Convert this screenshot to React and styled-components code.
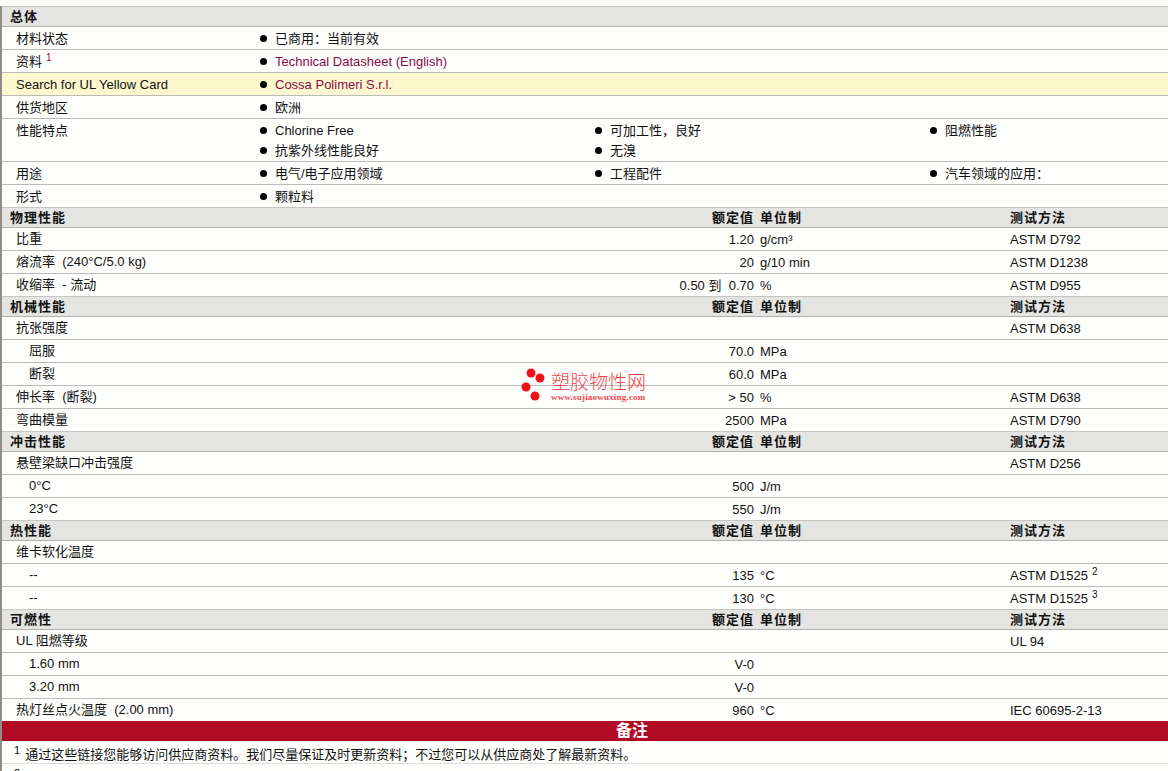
import styled, { createGlobalStyle } from 'styled-components'

const GlobalStyle = createGlobalStyle`
    html, body {
        margin: 0;
        height: 771px;
        overflow: hidden;
        background: #fefffd;
    }
    body {
        font-family: "Liberation Sans", "Noto Sans CJK SC", sans-serif;
        font-size: 13px;
        color: #111;
    }
`

const general = [
    { name: '材料状态', items: ['已商用：当前有效'] },
    { name: '资料', note: 1, noteLink: true, items: ['Technical Datasheet (English)'], link: true },
    { name: 'Search for UL Yellow Card', items: ['Cossa Polimeri S.r.l.'], link: true, highlight: true },
    { name: '供货地区', items: ['欧洲'] },
    { name: '性能特点', items: ['Chlorine Free', '可加工性，良好', '阻燃性能', '抗紫外线性能良好', '无溴'] },
    { name: '用途', items: ['电气/电子应用领域', '工程配件', '汽车领域的应用：'] },
    { name: '形式', items: ['颗粒料'] },
]

const sections = [
    {
        title: '物理性能',
        rows: [
            { name: '比重', value: '1.20', unit: 'g/cm³', test: 'ASTM D792' },
            { name: '熔流率  (240°C/5.0 kg)', value: '20', unit: 'g/10 min', test: 'ASTM D1238' },
            { name: '收缩率  - 流动', value: '0.50 到  0.70', unit: '%', test: 'ASTM D955' },
        ],
    },
    {
        title: '机械性能',
        rows: [
            { name: '抗张强度', test: 'ASTM D638' },
            { name: '屈服', sub: true, value: '70.0', unit: 'MPa' },
            { name: '断裂', sub: true, value: '60.0', unit: 'MPa' },
            { name: '伸长率  (断裂)', value: '> 50', unit: '%', test: 'ASTM D638' },
            { name: '弯曲模量', value: '2500', unit: 'MPa', test: 'ASTM D790' },
        ],
    },
    {
        title: '冲击性能',
        rows: [
            { name: '悬壁梁缺口冲击强度', test: 'ASTM D256' },
            { name: '0°C', sub: true, value: '500', unit: 'J/m' },
            { name: '23°C', sub: true, value: '550', unit: 'J/m' },
        ],
    },
    {
        title: '热性能',
        rows: [
            { name: '维卡软化温度' },
            { name: '--', sub: true, value: '135', unit: '°C', test: 'ASTM D1525', note: 2 },
            { name: '--', sub: true, value: '130', unit: '°C', test: 'ASTM D1525', note: 3 },
        ],
    },
    {
        title: '可燃性',
        rows: [
            { name: 'UL 阻燃等级', test: 'UL 94' },
            { name: '1.60 mm', sub: true, value: 'V-0' },
            { name: '3.20 mm', sub: true, value: 'V-0' },
            { name: '热灯丝点火温度  (2.00 mm)', value: '960', unit: '°C', test: 'IEC 60695-2-13' },
        ],
    },
]

const App = () => {
    return (
        <Sheet>
            <GlobalStyle />
            <SectionHead>
                <HeadTitle>总体</HeadTitle>
            </SectionHead>
            {general.map((row) => (
                <InfoRow key={row.name} $highlight={row.highlight}>
                    <Name>
                        {row.name}
                        {row.note && <Note $link={row.noteLink}>{row.note}</Note>}
                    </Name>
                    {row.items.map((item) => (
                        <Bullet key={item} $link={row.link}>{item}</Bullet>
                    ))}
                </InfoRow>
            ))}
            {sections.map((section) => (
                <Section key={section.title}>
                    <SectionHead>
                        <HeadTitle>{section.title}</HeadTitle>
                        <HeadValue>额定值</HeadValue>
                        <HeadUnit>单位制</HeadUnit>
                        <HeadTitle as="div">测试方法</HeadTitle>
                    </SectionHead>
                    {section.rows.map((row, index) => (
                        <DataRow key={index}>
                            <Name $sub={row.sub}>{row.name}</Name>
                            <Value>{row.value}</Value>
                            <Unit>{row.unit}</Unit>
                            <TestMethod>
                                {row.test}
                                {row.note && <Note>{row.note}</Note>}
                            </TestMethod>
                        </DataRow>
                    ))}
                </Section>
            ))}
            <NotesBar>备注</NotesBar>
            <NoteRow>
                <NoteMark>1</NoteMark>
                通过这些链接您能够访问供应商资料。我们尽量保证及时更新资料；不过您可以从供应商处了解最新资料。
            </NoteRow>
            <NoteRow>
                <NoteMark>2</NoteMark>
            </NoteRow>
            <Watermark>
                <svg width="28" height="38" viewBox="0 0 28 38">
                    <circle cx="10" cy="6" r="4.5" fill="#f01018" />
                    <circle cx="19" cy="11" r="4.5" fill="#f01018" />
                    <circle cx="5" cy="20" r="4.5" fill="#f01018" />
                    <circle cx="14" cy="29" r="4.5" fill="#f01018" />
                </svg>
                <WatermarkText>
                    <WatermarkName>塑胶物性网</WatermarkName>
                    <WatermarkUrl>www.sujiaowuxing.com</WatermarkUrl>
                </WatermarkText>
            </Watermark>
        </Sheet>
    )
}

const Sheet = styled.div`
    position: relative;
    box-sizing: border-box;
    width: 1262px;
    margin-top: 6px;
    border-left: 2px solid #8f8f86;
    white-space: pre-wrap;
`

const Section = styled.section`
    margin-top: -1px;
`

const SectionHead = styled.div`
    display: grid;
    grid-template-columns: 492px 252px 256px 1fr;
    box-sizing: border-box;
    height: 21px;
    padding-left: 8px;
    border-top: 1px solid #c6c6c2;
    border-bottom: 1px solid #b4b0b0;
    background: #e4e4e2;
    line-height: 19px;
    font-weight: bold;
`

const HeadTitle = styled.h3`
    margin: 0;
    font-size: 13px;
    letter-spacing: 1px;
`

const HeadValue = styled(HeadTitle).attrs({ as: 'div' })`
    text-align: right;
`

const HeadUnit = styled(HeadTitle).attrs({ as: 'div' })`
    padding-left: 6px;
`

const InfoRow = styled.div`
    display: grid;
    grid-template-columns: 258px 335px 335px 1fr;
    padding: 2px 0 1px;
    border-bottom: 1px solid #bbb;
    background: ${(props) => (props.$highlight ? '#fdf8cd' : 'transparent')};
    line-height: 19px;
    row-gap: 1px;
`

const Name = styled.div`
    padding-left: ${(props) => (props.$sub ? '27px' : '14px')};
`

const Bullet = styled.div`
    display: flex;
    align-items: center;
    color: ${(props) => (props.$link ? '#8a0a48' : 'inherit')};
    &::before {
        content: '';
        flex: none;
        width: 7px;
        height: 7px;
        margin: 0 8px 0 0;
        border-radius: 50%;
        background: #000;
    }
    &:nth-child(5) {
        grid-column: 2;
    }
`

const Note = styled.sup`
    margin-left: 4px;
    font-size: 10px;
    line-height: 0;
    color: ${(props) => (props.$link ? '#8a0a48' : 'inherit')};
`

const DataRow = styled.div`
    display: grid;
    grid-template-columns: 500px 252px 256px 1fr;
    box-sizing: border-box;
    height: 23px;
    border-bottom: 1px solid #bbb;
    line-height: 22px;
`

const Value = styled.div`
    padding-top: 1px;
    text-align: right;
`

const Unit = styled.div`
    padding: 1px 0 0 6px;
`

const TestMethod = styled.div`
    padding-top: 1px;
`

const NotesBar = styled.div`
    position: relative;
    height: 20px;
    margin-top: -1px;
    background: #b00a24;
    color: #fff;
    font-size: 16px;
    font-weight: bold;
    line-height: 20px;
    text-align: center;
`

const NoteRow = styled.div`
    box-sizing: border-box;
    height: 23px;
    padding-left: 12px;
    border-bottom: 1px solid #ddd;
    line-height: 28px;
`

const NoteMark = styled.sup`
    margin-right: 5px;
    font-size: 11px;
    line-height: 0;
`

const Watermark = styled.div`
    position: absolute;
    left: 519px;
    top: 361px;
    display: flex;
    gap: 2px;
`

const WatermarkText = styled.div`
    display: flex;
    flex-direction: column;
    color: #f01018;
    opacity: 0.8;
`

const WatermarkName = styled.span`
    padding-top: 6px;
    font-size: 19px;
    font-weight: 300;
    line-height: 20px;
`

const WatermarkUrl = styled.span`
    font-family: "Liberation Serif", serif;
    font-size: 9px;
    font-weight: bold;
    line-height: 8px;
    letter-spacing: 0.2px;
`

export default App
